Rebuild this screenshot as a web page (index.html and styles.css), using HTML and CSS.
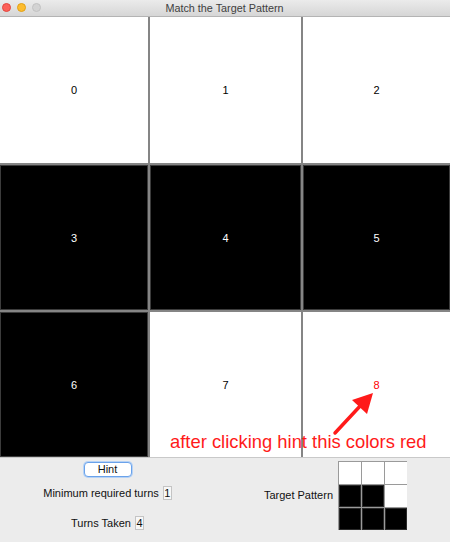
FILE: index.html
```html
<!DOCTYPE html>
<html>
<head>
<meta charset="utf-8">
<link rel="stylesheet" href="styles.css">
</head>
<body>
<div class="window">
  <div class="titlebar">
    <div class="lights">
      <span class="light red"></span>
      <span class="light yellow"></span>
      <span class="light gray"></span>
    </div>
    <div class="title">Match the Target Pattern</div>
  </div>
  <div class="board">
    <div class="cell white">0</div>
    <div class="cell white">1</div>
    <div class="cell white">2</div>
    <div class="cell black">3</div>
    <div class="cell black">4</div>
    <div class="cell black">5</div>
    <div class="cell black">6</div>
    <div class="cell white">7</div>
    <div class="cell white hint">8</div>
  </div>
  <div class="panel">
    <div class="left">
      <button class="hint-btn">Hint</button>
      <div class="stat stat-min">
        <span class="label">Minimum required turns</span>
        <span class="box">1</span>
      </div>
      <div class="stat stat-taken">
        <span class="label">Turns Taken</span>
        <span class="box">4</span>
      </div>
    </div>
    <div class="right">
      <span class="label">Target Pattern</span>
      <div class="mini">
        <div class="m w"></div><div class="m w"></div><div class="m w"></div>
        <div class="m b"></div><div class="m b"></div><div class="m w"></div>
        <div class="m b"></div><div class="m b"></div><div class="m b"></div>
      </div>
    </div>
  </div>
  <div class="note">after clicking hint this colors red</div>
  <svg class="arrow" width="450" height="542" viewBox="0 0 450 542">
    <line x1="335" y1="433" x2="362" y2="404" stroke="#ff1a1a" stroke-width="3.5" stroke-linecap="round"/>
    <polygon points="373,393 367,414 352,400" fill="#ff1a1a"/>
  </svg>
</div>
</body>
</html>
```
FILE: styles.css
```css
html, body {
  margin: 0;
  padding: 0;
  background: #ececec;
}
.window {
  position: relative;
  width: 450px;
  height: 542px;
  display: flex;
  flex-direction: column;
  font-family: "Liberation Sans", Arial, sans-serif;
  overflow: hidden;
}
.titlebar {
  position: relative;
  height: 16px;
  border-bottom: 1px solid #b4b4b4;
  background: linear-gradient(#ebebeb, #d6d6d6);
  display: flex;
  align-items: center;
  justify-content: center;
}
.lights {
  position: absolute;
  left: 2px;
  top: 3px;
  display: flex;
  gap: 6px;
}
.light {
  width: 9px;
  height: 9px;
  border-radius: 50%;
  box-sizing: border-box;
}
.light.red { background: #fc5f57; border: 1px solid #e2463f; }
.light.yellow { background: #fdbc2e; border: 1px solid #e1a116; }
.light.gray { background: #d3d3d3; border: 1px solid #c2c2c2; }
.title {
  font-size: 10.8px;
  color: #404040;
  margin-left: -1px;
}
.board {
  height: 440px;
  display: grid;
  grid-template-columns: 148px 151px 147px;
  grid-template-rows: 146px 145px 145px;
  gap: 2px;
  background: #858585;
}
.cell {
  display: flex;
  align-items: center;
  justify-content: center;
  font-size: 11px;
}
.cell.white { background: #fff; color: #000; }
.cell.black { background: #000; color: #fff; box-shadow: inset 0 0 0 1px #3c3c3c; }
.cell.hint { color: #ff0000; }
.panel {
  flex: 1;
  border-top: 1px solid #c9c9c9;
  background: #ececec;
  display: flex;
  font-size: 11px;
  color: #111;
}
.left {
  width: 215px;
  display: flex;
  flex-direction: column;
  align-items: center;
  padding-top: 4px;
}
.hint-btn {
  width: 48px;
  height: 15px;
  padding: 0;
  border: 1px solid #6aa2ea;
  border-radius: 4px;
  background: #fff;
  box-shadow: 0 0 0 1px #b6d2f5;
  font-family: "Liberation Sans", Arial, sans-serif;
  font-size: 11px;
  color: #111;
  line-height: 13px;
}
.stat {
  display: flex;
  align-items: center;
  gap: 4px;
}
.stat-min { margin-top: 9px; }
.stat-taken { margin-top: 16px; }
.box {
  width: 9px;
  height: 14px;
  box-sizing: border-box;
  border: 1px solid #c4c4c4;
  background: #f7f7f7;
  display: flex;
  align-items: center;
  justify-content: center;
  font-size: 11px;
}
.right {
  flex: 1;
  display: flex;
  align-items: center;
  justify-content: flex-end;
  padding-right: 43px;
  padding-bottom: 10px;
  gap: 5px;
}
.mini {
  width: 69px;
  height: 69px;
  box-sizing: border-box;
  padding: 1px 0 0 1px;
  display: grid;
  grid-template-columns: 22px 22px 22px;
  grid-template-rows: 22px 22px 22px;
  gap: 1px;
  background: #9a9a9a;
}
.m.w { background: #fff; }
.m.b { background: #000; box-shadow: inset 0 0 0 1px #2a2a2a; }
.note {
  position: absolute;
  left: 170px;
  top: 433px;
  font-size: 18.4px;
  line-height: 18px;
  color: #ff1a1a;
  white-space: nowrap;
}
.arrow {
  position: absolute;
  left: 0;
  top: 0;
  pointer-events: none;
}
```
